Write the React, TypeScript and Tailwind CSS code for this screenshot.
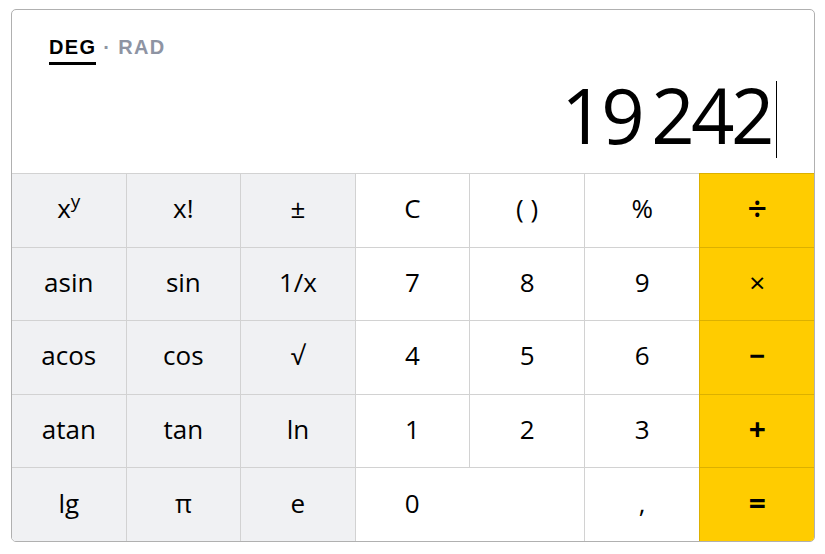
import React from "react";

type Key = {
  label: React.ReactNode;
  kind: "sci" | "num" | "op";
  span?: boolean;
  cls?: string;
};

const KEYS: Key[] = [
  {
    label: (
      <span>
        x<span className="relative -top-[10px] text-[19px]">y</span>
      </span>
    ),
    kind: "sci",
  },
  { label: "x!", kind: "sci" },
  { label: "±", kind: "sci" },
  { label: "C", kind: "num" },
  { label: "( )", kind: "num" },
  { label: "%", kind: "num" },
  { label: "÷", kind: "op", cls: "text-[34px] font-semibold" },
  { label: "asin", kind: "sci" },
  { label: "sin", kind: "sci" },
  { label: "1/x", kind: "sci" },
  { label: "7", kind: "num" },
  { label: "8", kind: "num" },
  { label: "9", kind: "num" },
  { label: "×", kind: "op", cls: "text-[28px] font-normal" },
  { label: "acos", kind: "sci" },
  { label: "cos", kind: "sci" },
  { label: "√", kind: "sci" },
  { label: "4", kind: "num" },
  { label: "5", kind: "num" },
  { label: "6", kind: "num" },
  { label: "−", kind: "op", cls: "text-[28px] font-bold" },
  { label: "atan", kind: "sci" },
  { label: "tan", kind: "sci" },
  { label: "ln", kind: "sci" },
  { label: "1", kind: "num" },
  { label: "2", kind: "num" },
  { label: "3", kind: "num" },
  { label: "+", kind: "op", cls: "text-[30px] font-bold" },
  { label: "lg", kind: "sci" },
  { label: "π", kind: "sci" },
  { label: "e", kind: "sci" },
  { label: "0", kind: "num", span: true },
  { label: ",", kind: "num" },
  { label: "=", kind: "op", cls: "text-[30px] font-bold" },
];

const KeyButton = ({ k, col }: { k: Key; col: number }) => {
  const base =
    "flex items-center leading-none text-black border-t cursor-pointer select-none pb-[4px]";
  // gray dividers sit on the right edge; the yellow column draws its own left edge
  const edge = col < 5 && !(k.span && col + 2 > 5) ? "border-r" : "";
  if (k.kind === "op") {
    return (
      <button
        className={`${base} ${k.cls} justify-center bg-[#ffcc00] border-[#dcb000] border-l`}
      >
        {k.label}
      </button>
    );
  }
  if (k.span) {
    return (
      <button
        className={`${base} ${edge} text-[26px] col-span-2 bg-white border-[#d2d2d2] justify-start pl-[49px]`}
      >
        {k.label}
      </button>
    );
  }
  return (
    <button
      className={`${base} ${edge} text-[26px] justify-center border-[#d2d2d2] ${
        k.kind === "sci" ? "bg-[#f0f1f3]" : "bg-white"
      }`}
    >
      {k.label}
    </button>
  );
};

export default function App() {
  let col = 0;
  return (
    <div className="w-[825px] h-[554px] bg-white pt-[9px] pl-[11px]">
      <div
        className="w-[804px] h-[533px] border border-[#b0b0b0] rounded-[5px] overflow-hidden flex flex-col bg-white"
        style={{ fontFamily: '"Open Sans", "Noto Sans", sans-serif' }}
      >
        <div className="h-[163px] flex flex-col px-[37px] pt-[27px]">
          <div
            className="flex items-start gap-[7px] text-[20px] font-bold tracking-[1.3px] leading-none"
            style={{ fontFamily: '"Liberation Sans", Arial, sans-serif' }}
          >
            <span className="text-black border-b-[3px] border-black pb-[5px]">DEG</span>
            <span className="text-[#8e94a3]">·</span>
            <span className="text-[#8e94a3]">RAD</span>
          </div>
          <div className="flex justify-end items-center mt-[11px]">
            <span
              className="text-[76px] leading-none text-black tracking-[-3.5px] flex"
              style={{ fontFamily: '"Open Sans", sans-serif' }}
            >
              <span>19</span>
              <span className="ml-[10px]">242</span>
            </span>
            <span className="w-px h-[77px] bg-black ml-[5px] translate-y-[5px]" />
          </div>
        </div>
        <div className="flex-1 grid grid-cols-7 grid-rows-5">
          {KEYS.map((k, i) => {
            const c = col;
            col = (col + (k.span ? 2 : 1)) % 7;
            return <KeyButton key={i} k={k} col={c} />;
          })}
        </div>
      </div>
    </div>
  );
}
